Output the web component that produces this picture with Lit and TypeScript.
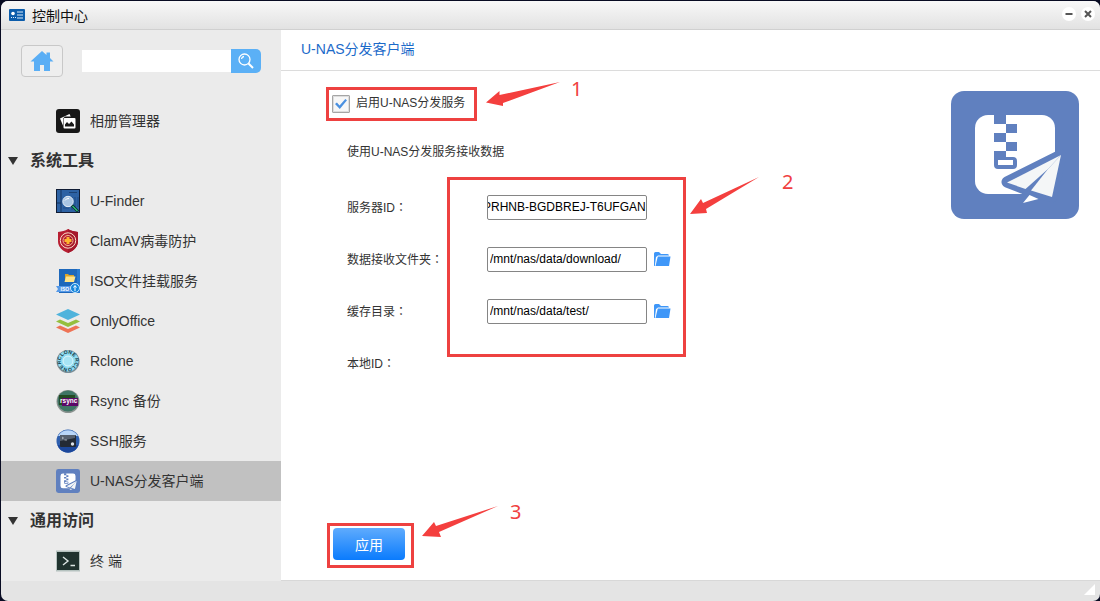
import { LitElement, html, svg, css, type TemplateResult } from "lit";
import { customElement, property, query } from "lit/decorators.js";
import { classMap } from "lit/directives/class-map.js";

const distributeShapes = svg`
  <rect width="128" height="128" rx="13" fill="#6080bf"/>
  <rect x="24" y="24" width="80" height="79" rx="13" fill="#fff"/>
  <path d="M43 23h12v10h11v9H55v9h11v9H55v6h7a4 4 0 0 1 4 4v4a4 4 0 0 1-4 4H47a4 4 0 0 1-4-4V60h12v-9H43v-9h12v-9H43z" fill="#6080bf"/>
  <path d="M47 69h15v5H47z" fill="#fff"/>
  <path d="M56 91 110 64 101 106 80 99.500 74 98z" fill="#6080bf" stroke="#6080bf" stroke-width="11" stroke-linejoin="round"/>
  <path d="M56 91.500 110 64 97 78 74.500 98z" fill="#f4f6f7"/>
  <path d="M97 78 110 64 101 106 80 99.500z" fill="#f4f6f7"/>
  <path d="M78.500 104 87.500 108 72 112z" fill="#fff"/>`;

const icons: Record<string, TemplateResult> = {
  album: html`<svg viewBox="0 0 24 24"><rect width="24" height="24" rx="3" fill="#181818"/>
    <path d="M4 9.500 13.500 5l1.200 2.500H9L7 9.500v7z" fill="#fff"/>
    <rect x="7.500" y="9" width="12" height="10.500" rx="1" fill="#fff"/>
    <path d="M9 17.500v-2l2-2.500 2 2 2.500-2.500 2.500 3v2z" fill="#181818"/></svg>`,
  finder: html`<svg viewBox="0 0 24 24"><rect width="24" height="24" fill="#101c34"/>
    <rect x="1" y="1" width="22" height="22" fill="#2d62a4"/>
    <path d="M5 1v22M1 14h4" stroke="#17345f"/><path d="M7 19h6M16 8v13M19 8v13M22 8v10" stroke="#1f4a85"/>
    <path d="M13 3.500h8" stroke="#1c4274"/><circle cx="12" cy="12.500" r="5.200" fill="#a9c5e3" stroke="#e4edf6"/>
    <path d="M9 11.500a4 4 0 0 1 4-2" stroke="#fff" fill="none"/>
    <path d="m16 16.500 6 6" stroke="#082f20" stroke-width="3"/><path d="m16.500 17 5 5" stroke="#2bb57b" stroke-width="1.500"/></svg>`,
  shield: html`<svg viewBox="0 0 24 24"><path d="M12 0c3 2 6 2.500 10 3v9c0 6-4 9.500-10 12C6 21.500 2 18 2 12V3c4-.5 7-1 10-3z" fill="#b81f32"/>
    <path d="M12 0c3 2 6 2.500 10 3v9c0 6-4 9.500-10 12z" fill="#a5172b"/>
    <g fill="none" stroke="#f8ddc9"><circle cx="12" cy="11.500" r="7.700"/><circle cx="12" cy="11.500" r="5" stroke="#f4b594"/></g>
    <path d="M10.500 8h3v2h2v3h-2v2h-3v-2h-2v-3h2z" fill="#ffb52e"/></svg>`,
  iso: html`<svg viewBox="0 0 24 24"><rect x="3" width="21" height="24" fill="#1e68bb"/><path d="M21 0h3v24h-3z" fill="#2a7bd0"/>
    <path d="M9 5h3l1 1h5v7H9z" fill="#dba52c"/><path d="M10 7.500h9.500L18 13H8.500z" fill="#ffe38a"/>
    <path d="M0 17h21v6H0l2-3z" fill="#5599e8"/>
    <text x="4.500" y="22" font-size="5" font-weight="700" fill="#fff">ISO</text>
    <circle cx="19" cy="19" r="4.500" fill="#1686dc" stroke="#c6e9ff"/><path d="M19 22v-5m-1.500 1.500 1.500-2 1.500 2" stroke="#fff" fill="none"/></svg>`,
  office: html`<svg viewBox="0 0 24 24"><path d="m0 18.500 4-2 8 3.500 8-3.500 4 2L12 24z" fill="#ee7355"/>
    <path d="m0 12.500 4-2 8 3.500 8-3.500 4 2L12 18z" fill="#95bf3d"/>
    <path d="M12 0 24 5.500 12 11 0 5.500z" fill="#4eb3dc"/></svg>`,
  rclone: html`<svg viewBox="0 0 24 24"><circle cx="12" cy="12.500" r="11.500" fill="#7a8e98"/><circle cx="12" cy="12" r="10.500" fill="#8fdcf2"/>
    <circle cx="12" cy="12" r="5" fill="#a7e4f5" stroke="#e0f7fc"/>
    <path id="ring" d="M5.500 15a7 7 0 1 1 13-6 7 7 0 1 1-13 6" fill="none"/>
    <text font-size="5" font-weight="700" fill="#123746"><textPath href="#ring">RCLONE RCLONE</textPath></text></svg>`,
  rsync: html`<svg viewBox="0 0 24 24"><circle cx="12" cy="12.500" r="11.500" fill="#8b9390"/><circle cx="12" cy="12" r="10.500" fill="#3f7565"/>
    <path d="M3 6h16v10H3z" fill="#234b23"/><path d="M6 9h16v8H6z" fill="#5c0868"/>
    <text x="4" y="13.500" font-size="6.500" font-weight="700" fill="#fff">rsync</text></svg>`,
  ssh: html`<svg viewBox="0 0 24 24"><circle cx="12" cy="12" r="11.500" fill="#2e5fae"/><path d="M2 7a11.500 11.500 0 0 1 20 0z" fill="#b9d6f8"/>
    <path d="M1.500 16a11 11 0 0 0 21 0z" fill="#1c479b"/>
    <rect x="4" y="6" width="16" height="12" rx="1" fill="#232a35"/><path d="M4 7a1 1 0 0 1 1-1h14v3L4 12z" fill="#56606e"/>
    <path d="m6 8 1.500 1L6 10m2.500 1H11" stroke="#d5dbe2" fill="none" stroke-width=".7"/><circle cx="16.500" cy="15" r="1.700" fill="#dce3ea"/></svg>`,
  distribute: html`<svg viewBox="0 0 128 128">${distributeShapes}</svg>`,
  terminal: html`<svg viewBox="0 0 24 24"><rect y="1.500" width="24" height="21" fill="#b5c2bf"/><rect x="1" y="3" width="22" height="18" fill="#20332f"/>
    <path d="m7 8 5 4-5 4m7.500 0.500H19" stroke="#dce6e4" stroke-width="1.400" fill="none"/></svg>`,
};

interface Entry { label: string; icon?: string; selected?: boolean }

const entries: Entry[] = [
  { label: "相册管理器", icon: "album" },
  { label: "系统工具" },
  { label: "U-Finder", icon: "finder" },
  { label: "ClamAV病毒防护", icon: "shield" },
  { label: "ISO文件挂载服务", icon: "iso" },
  { label: "OnlyOffice", icon: "office" },
  { label: "Rclone", icon: "rclone" },
  { label: "Rsync 备份", icon: "rsync" },
  { label: "SSH服务", icon: "ssh" },
  { label: "U-NAS分发客户端", icon: "distribute", selected: true },
  { label: "通用访问" },
  { label: "终 端", icon: "terminal" },
];

@customElement("side-bar")
export class SideBar extends LitElement {
  @property({ attribute: false }) entries: Entry[] = [];

  static styles = css`
    :host { display: block; overflow: hidden; background: #ebebeb; }
    .tools { display: flex; align-items: center; height: 41px; padding: 10px 20px 20px; }
    .home { flex: none; width: 42px; height: 32px; margin-right: 19px; padding: 0; border: 1px solid #c8c8c8; border-radius: 4px; background: #eee; display: grid; place-items: center; }
    .home svg { width: 24px; height: 22px; }
    .search { flex: 1; min-width: 0; display: flex; align-items: center; }
    .search input { flex: 1; min-width: 0; height: 22px; border: 0; padding: 0 4px; background: #fff; box-sizing: border-box; }
    .go { flex: none; width: 30px; height: 24px; border: 0; padding: 0; border-radius: 0 5px 5px 0; background: #5bb0f6; display: grid; place-items: center; }
    .go svg { width: 16px; height: 16px; }
    ul { list-style: none; margin: 0; padding: 0; }
    .item { display: flex; align-items: center; gap: 10px; height: 40px; padding-left: 55px; font-size: 14px; line-height: 20px; color: #333; text-decoration: none; }
    .item svg { width: 24px; height: 24px; flex: none; }
    .item span { height: 20px; }
    .selected { background: #c1c1c1; }
    .group { display: flex; align-items: center; gap: 12px; width: 100%; height: 40px; padding: 0 0 0 7px; border: 0; background: none; font: inherit; font-size: 16px; font-weight: 700; color: #333; }
    .group svg { width: 10px; height: 8px; }
    .group span { height: 20px; line-height: 20px; }
  `;

  render() {
    return html`
      <div class="tools">
        <button class="home" aria-label="主页">
          <svg viewBox="0 0 24 22"><path d="M12 1 .5 11.500H4V21h6v-6h4v6h6v-9.500h3.500L20 8V2.500h-3.500V5z" fill="#5aaef5"/></svg>
        </button>
        <form class="search" @submit=${(e: Event) => e.preventDefault()}>
          <input type="search" aria-label="搜索" />
          <button class="go" aria-label="搜索">
            <svg viewBox="0 0 16 16" fill="none" stroke="#fff" stroke-width="1.300"><circle cx="6.500" cy="6.500" r="5.500"/><path d="M3.500 6a3 3 0 0 1 2.500-2.500"/><path d="m10.500 10.500 4.500 4.500" stroke-width="2"/></svg>
          </button>
        </form>
      </div>
      <nav><ul>
        ${this.entries.map((e) => html`<li>${e.icon
          ? html`<a href="#" class=${classMap({ item: true, selected: !!e.selected })}>${icons[e.icon]}<span>${e.label}</span></a>`
          : html`<button class="group" aria-expanded="true"><svg viewBox="0 0 10 8"><path d="M0 0h10L5 8z" fill="#333"/></svg><span>${e.label}</span></button>`}</li>`)}
      </ul></nav>`;
  }
}

const folder = html`<svg viewBox="0 0 17 15" aria-hidden="true"><path d="M0 1.500A1.500 1.500 0 0 1 1.500 0H5l2 2h6.500A1.500 1.500 0 0 1 15 3.500H4L2 5 .8 14H0z" fill="#3f97f8"/><path d="M3.800 4.500H16.500L15 14H1.500z" fill="#3f97f8"/></svg>`;

@customElement("client-settings")
export class ClientSettings extends LitElement {
  @query("#server") server!: HTMLInputElement;

  static styles = css`
    :host { display: flex; flex-direction: column; background: #fff; border-bottom: 1px solid #d8d8d8; }
    h1 { margin: 0; padding: 0 0 2px 20px; font-size: 14px; font-weight: 400; line-height: 38px; color: #1b6ac9; border-bottom: 1px solid #dcdcdc; }
    .body { flex: 1; display: flex; justify-content: space-between; align-items: stretch; padding: 16px 21px 12px 45px; }
    .logo { width: 128px; height: 128px; flex: none; margin-top: 4px; }
    form { flex: 1; display: flex; flex-direction: column; align-items: flex-start; font-size: 12px; color: #333; }
    .framed { position: relative; border: 3px solid #ee4140; }
    .enable { display: flex; align-items: center; gap: 6px; height: 28px; padding: 0 9px 0 3px; }
    .enable input { appearance: none; width: 18px; height: 18px; margin: 0; border: 1px solid #a5a5a5; border-radius: 1px; background: #f7f7f7; box-shadow: inset 0 0 0 1px #ddd; display: grid; place-items: center; }
    .enable input:checked::before { content: ""; width: 12px; height: 10px; background: #4a90e0; clip-path: polygon(0 50%, 16% 36%, 38% 66%, 86% 0, 100% 12%, 40% 100%); }
    .enable label { line-height: 26px; padding-bottom: 2px; }
    .note { margin: 0; padding: 21px 0 19px 21px; line-height: 20px; }
    .fields { position: relative; padding-left: 21px; }
    .field { display: flex; align-items: center; height: 52px; line-height: 20px; }
    .field label, .field .name { width: 140px; height: 20px; }
    .colon { font-family: "Noto Sans CJK TC", sans-serif; }
    .field input { box-sizing: border-box; width: 160px; height: 25px; padding: 1px 2px; border: 1px solid #858585; border-radius: 2px; font: inherit; font-size: 12px; color: #000; background: #fff; }
    .field #server { padding: 1px 0; }
    .browse { margin-left: 7px; padding: 0; border: 0; background: none; display: flex; }
    .browse svg { width: 17px; height: 15px; }
    .area { position: absolute; left: 121px; top: -4px; width: 233px; height: 174px; border: 3px solid #ee4140; }
    .arrow { position: absolute; overflow: visible; width: 80px; height: 40px; fill: #f43f3e; }
    .digit { position: absolute; font-family: "Noto Sans", sans-serif; font-size: 20px; line-height: 20px; color: #f04040; }
    .a1 { left: 157px; top: -8px; } .d1 { left: 242px; top: -11px; }
    .a2 { left: 240px; top: -3px; } .d2 { left: 332px; top: -8px; }
    .a3 { left: 92px; top: -20px; } .d3 { left: 180px; top: -24px; }
    .apply { margin: auto 0 0 1px; padding: 2px 6px 5px 3px; }
    .apply button { display: block; width: 72px; height: 32px; border: 0; border-radius: 4px; padding: 0; font: inherit; font-size: 14px; color: #fff; background: linear-gradient(#5fabfd, #0a7bfd); }
  `;

  firstUpdated() {
    this.server.scrollLeft = this.server.scrollWidth;
  }

  render() {
    const colon = html`<span class="colon">：</span>`;
    return html`
      <h1>U-NAS分发客户端</h1>
      <div class="body">
        <form @submit=${(e: Event) => e.preventDefault()}>
          <div class="enable framed">
            <input id="enable" type="checkbox" checked /><label for="enable">启用U-NAS分发服务</label>
            <svg class="arrow a1" viewBox="0 0 80 40"><path d="M0 20.500 13.500 9v4L74 0 17 21v3z"/></svg>
            <span class="digit d1">1</span>
          </div>
          <p class="note">使用U-NAS分发服务接收数据</p>
          <div class="fields">
            <div class="field"><label for="server">服务器ID${colon}</label><input id="server" type="text" value="PRHNB-BGDBREJ-T6UFGAN" /></div>
            <div class="field"><label for="receive">数据接收文件夹${colon}</label><input id="receive" type="text" value="/mnt/nas/data/download/" /><button class="browse" type="button" aria-label="浏览">${folder}</button></div>
            <div class="field"><label for="cache">缓存目录${colon}</label><input id="cache" type="text" value="/mnt/nas/data/test/" /><button class="browse" type="button" aria-label="浏览">${folder}</button></div>
            <div class="field"><span class="name">本地ID${colon}</span></div>
            <div class="area">
              <svg class="arrow a2" viewBox="0 0 80 40"><path d="M0 37 11 22l2 4L69 0 16 32l1 4z"/></svg>
              <span class="digit d2">2</span>
            </div>
          </div>
          <div class="apply framed">
            <button type="submit">应用</button>
            <svg class="arrow a3" viewBox="0 0 80 40"><path d="M0 30 12 16l2 4L76 0 17 26l2 5z"/></svg>
            <span class="digit d3">3</span>
          </div>
        </form>
        <svg class="logo" viewBox="0 0 128 128">${distributeShapes}</svg>
      </div>`;
  }
}

@customElement("app-root")
export class AppRoot extends LitElement {
  static styles = css`
    :host { display: block; box-sizing: border-box; height: 100vh; padding: 1px 0 0 1px; background: #080b22; font-family: "Liberation Sans", "Noto Sans CJK SC", sans-serif; }
    .window { display: flex; flex-direction: column; height: 100%; border-radius: 7px; overflow: hidden; background: #e4e4e4; }
    header { display: flex; align-items: center; gap: 7px; height: 28px; padding: 0 5px 0 8px; border-bottom: 1px solid #d0d0d0; background: linear-gradient(#f8f8f8, #e2e2e2); }
    .badge { width: 16px; height: 12px; }
    .title { flex: 1; font-size: 14px; color: #111; }
    .controls { display: flex; gap: 5px; padding-bottom: 2px; }
    .controls button { width: 14px; height: 14px; padding: 0; border: 0; border-radius: 50%; background: #fff; display: grid; place-items: center; }
    .controls svg { width: 8px; height: 8px; stroke: #555; stroke-width: 2; }
    .panes { flex: 1; min-height: 0; display: grid; grid-template-columns: 280px 1fr; }
    side-bar { min-height: 0; }
    footer { display: flex; justify-content: flex-end; align-items: center; height: 20px; padding-right: 5px; }
    .grip { width: 11px; height: 11px; margin-bottom: 3px; }
    @media (max-width: 700px) { .panes { grid-template-columns: 200px 1fr; } }
  `;

  render() {
    return html`
      <div class="window">
        <header>
          <svg class="badge" viewBox="0 0 16 12"><rect width="16" height="12" rx="1" fill="#0b5cab"/><circle cx="4" cy="4.500" r="1.800" fill="#fff"/><path d="M8 3h6M8 6h6M8 9h6" stroke="#dcebfa"/><path d="M2 8.500h5" stroke="#dcebfa" stroke-dasharray="1 1"/></svg>
          <span class="title">控制中心</span>
          <div class="controls">
            <button aria-label="最小化"><svg viewBox="0 0 8 8"><path d="M0.500 4h7"/></svg></button>
            <button aria-label="关闭"><svg viewBox="0 0 8 8"><path d="m1 1 6 6m0-6L1 7"/></svg></button>
          </div>
        </header>
        <div class="panes">
          <side-bar .entries=${entries}></side-bar>
          <client-settings></client-settings>
        </div>
        <footer><svg class="grip" viewBox="0 0 11 11"><path d="M11 0v11H0z" fill="#fff"/></svg></footer>
      </div>`;
  }
}
